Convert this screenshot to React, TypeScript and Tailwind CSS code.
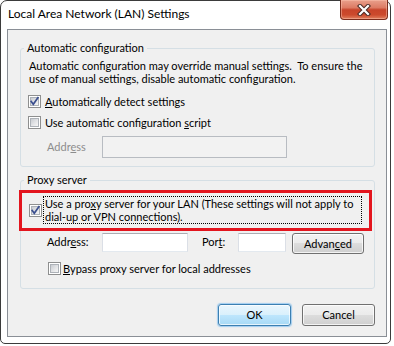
import React from "react";

function Checkbox({ checked }: { checked?: boolean }) {
  return (
    <span className="relative flex w-[13px] h-[13px] shrink-0 border border-[#8e8f8f] bg-white p-[1px]">
      <span className="block w-full h-full border border-[#adb2b8] bg-[linear-gradient(135deg,#c9ccd1_0%,#e6e7e9_60%,#f6f6f6_100%)]" />
      {checked && (
        <svg className="absolute left-0 top-0" width="11" height="11" viewBox="0 0 11 11">
          <path d="M2.2 5.4 L4.3 8.3 L8.9 1.8" stroke="#3b4f8f" strokeWidth="1.7" fill="none" strokeLinecap="square" />
        </svg>
      )}
    </span>
  );
}

function Btn({ children, def, w }: { children: React.ReactNode; def?: boolean; w: string }) {
  return (
    <div
      className={
        def
          ? `${w} flex items-center justify-center rounded-[3px] border border-[#3c7fb1] bg-[linear-gradient(to_bottom,#eaf6fd_0%,#d9f0fc_50%,#bee6fd_50%,#a7d9f5_100%)] shadow-[inset_0_0_0_1px_rgba(255,255,255,0.7),0_0_1px_1px_rgba(80,170,240,0.5)] leading-[16px]`
          : `${w} flex items-center justify-center rounded-[3px] border border-[#707070] bg-[linear-gradient(to_bottom,#f2f2f2_0%,#ebebeb_50%,#dddddd_50%,#cfcfcf_100%)] shadow-[inset_0_0_0_1px_rgba(255,255,255,0.75)] leading-[16px]`
      }
    >
      {children}
    </div>
  );
}

function CloseBtn() {
  return (
    <div className="absolute -top-[1px] right-[2px] w-[48px] h-[20px] rounded-b-[4px] border border-t-0 border-[#7a2c1c] bg-[linear-gradient(to_bottom,#e9a08c_0%,#dd7b64_40%,#c7442a_52%,#cc4a2d_78%,#e0805f_100%)] shadow-[inset_0_0_0_1px_rgba(255,200,180,0.45)] flex items-center justify-center">
      <svg width="14" height="12" viewBox="0 0 14 12">
        <path d="M3 2 L11 10 M11 2 L3 10" stroke="#4a2b26" strokeWidth="4.2" strokeLinecap="square" fill="none" />
        <path d="M3 2 L11 10 M11 2 L3 10" stroke="#ffffff" strokeWidth="2.2" strokeLinecap="square" fill="none" />
      </svg>
    </div>
  );
}

export default function App() {
  return (
    <div className="w-[394px] h-[346px] bg-white font-['Lato','Noto_Sans',sans-serif] text-[11px] text-black">
      <div className="relative w-[391px] h-[344px] border border-[#3b3b3b] rounded-t-[7px] rounded-b-[5px] bg-white flex flex-col">
        <div className="h-[28px] shrink-0">
          <div className="ml-[7px] mt-[5px] text-[12px] leading-[16px] whitespace-nowrap">Local Area Network (LAN) Settings</div>
        </div>
        <CloseBtn />
        <div className="ml-[6px] w-[380px] h-[308px] border border-[#8a8f96] bg-[#f0f0f0] flex flex-col">
          {/* Automatic configuration */}
          <fieldset className="ml-[12px] mt-[10px] w-[355px] border border-[#d5dfe5] rounded-[3px] px-0 pt-0 pb-[8px] flex flex-col">
            <legend className="ml-[3px] px-[3px] leading-[16px]">Automatic configuration</legend>
            <div className="ml-[8px] mt-[3px] leading-[13px] whitespace-nowrap">
              Automatic configuration may override manual settings.&nbsp; To ensure the
              <br />
              use of manual settings, disable automatic configuration.
            </div>
            <div className="ml-[7px] mt-[10px] flex items-center h-[13px]">
              <Checkbox checked />
              <span className="ml-[4px] leading-[13px] whitespace-nowrap">
                <u>A</u>utomatically detect settings
              </span>
            </div>
            <div className="ml-[7px] mt-[8px] flex items-center h-[13px]">
              <Checkbox />
              <span className="ml-[4px] leading-[13px] whitespace-nowrap">
                Use automatic configuration <u>s</u>cript
              </span>
            </div>
            <div className="ml-[26px] mt-[7px] flex items-center h-[22px]">
              <span className="w-[55px] text-[#8d8d8d] leading-[16px]">
                Addr<u>e</u>ss
              </span>
              <div className="w-[185px] h-[22px] border border-[#b8bcc2] bg-[#f2f2f2]" />
            </div>
          </fieldset>

          {/* Proxy server */}
          <fieldset className="ml-[12px] mt-[5px] w-[355px] border border-[#d5dfe5] rounded-[3px] px-0 pt-0 pb-[13px] flex flex-col">
            <legend className="ml-[3px] px-[3px] leading-[16px]">Proxy server</legend>
            <div className="relative ml-[8px] mt-[8px] flex items-center">
              <Checkbox checked />
              <div className="ml-[1px] w-[319px] border border-dotted border-black pl-[1px] leading-[13px] whitespace-nowrap">
                Use a pro<u>x</u>y server for your LAN (These settings will not apply to
                <br />
                dial-up or VPN connections).
              </div>
              <span className="pointer-events-none absolute -left-[10px] right-[2px] -top-[6px] -bottom-[7px] border-[3px] border-[#e3151e]" />
            </div>
            <div className="ml-[26px] mt-[9px] flex items-start">
              <span className="w-[55px] leading-[16px] mt-[1px]">
                Addr<u>e</u>ss:
              </span>
              <div className="w-[86px] h-[19px] border border-[#abadb3] border-x-[#dbdfe6] border-b-[#e3e9ef] bg-white" />
              <span className="ml-[14px] w-[36px] leading-[16px] mt-[1px]">
                Por<u>t</u>:
              </span>
              <div className="w-[48px] h-[19px] border border-[#abadb3] border-x-[#dbdfe6] border-b-[#e3e9ef] bg-white" />
              <div className="ml-[6px] h-[21px] flex">
                <Btn w="w-[72px]">
                  Advan<u>c</u>ed
                </Btn>
              </div>
            </div>
            <div className="ml-[27px] mt-[8px] flex items-center h-[13px]">
              <Checkbox />
              <span className="ml-[2px] leading-[13px] whitespace-nowrap">
                <u>B</u>ypass proxy server for local addresses
              </span>
            </div>
          </fieldset>

          <div className="mt-[15px] mr-[11px] flex justify-end gap-[11px] h-[22px]">
            <Btn def w="w-[73px]">
              OK
            </Btn>
            <Btn w="w-[73px]">Cancel</Btn>
          </div>
        </div>
      </div>
    </div>
  );
}
